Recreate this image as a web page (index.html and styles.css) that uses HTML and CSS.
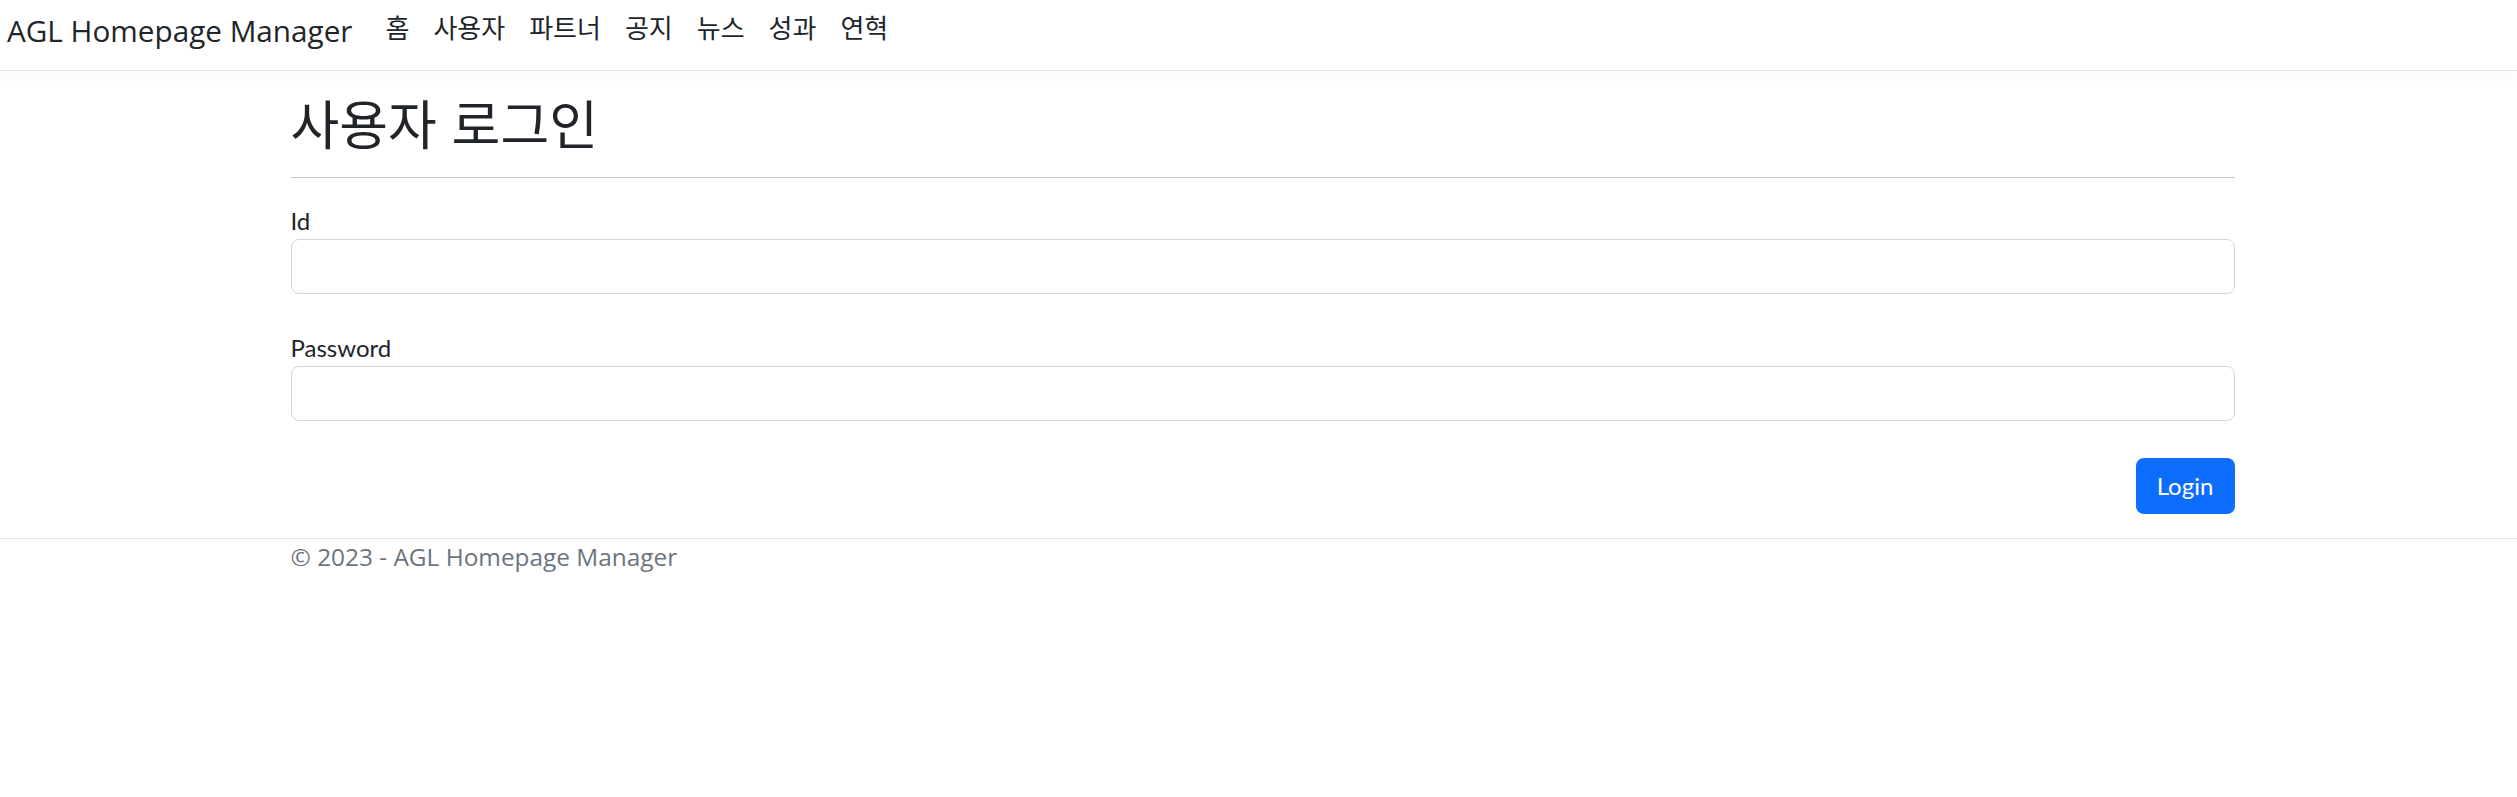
FILE: index.html
```html
<!DOCTYPE html>
<html lang="ko">
<head>
<meta charset="utf-8">
<title>사용자 로그인 - AGL Homepage Manager</title>
<link rel="stylesheet" href="styles.css">
</head>
<body>
<header class="navbar">
  <a class="brand" href="#">AGL Homepage Manager</a>
  <ul class="nav">
    <li><a class="nav-link" href="#">홈</a></li>
    <li><a class="nav-link" href="#">사용자</a></li>
    <li><a class="nav-link" href="#">파트너</a></li>
    <li><a class="nav-link" href="#">공지</a></li>
    <li><a class="nav-link" href="#">뉴스</a></li>
    <li><a class="nav-link" href="#">성과</a></li>
    <li><a class="nav-link" href="#">연혁</a></li>
  </ul>
</header>
<main class="container">
  <h1 class="title">사용자 로그인</h1>
  <hr class="divider">
  <form class="login-form">
    <div class="field">
      <label class="field-label" for="id">Id</label>
      <input class="field-input" id="id" type="text">
    </div>
    <div class="field">
      <label class="field-label" for="pw">Password</label>
      <input class="field-input" id="pw" type="password">
    </div>
    <div class="actions">
      <button class="btn-primary" type="button">Login</button>
    </div>
  </form>
</main>
<footer class="footer">
  <div class="container footer-text">© 2023 - AGL Homepage Manager</div>
</footer>
</body>
</html>
```

FILE: styles.css
```css
* { box-sizing: border-box; }

html, body {
  margin: 0;
  padding: 0;
  background: #fff;
  color: #212529;
  font-family: "Open Sans", "Noto Sans CJK KR", sans-serif;
}

.navbar {
  display: flex;
  align-items: flex-start;
  height: 71px;
  padding: 8px 0 0 7px;
  border-bottom: 1px solid #e3e3e3;
  box-shadow: 0 6px 18px rgba(0, 0, 0, 0.03);
}

.brand {
  font-size: 29.7px;
  line-height: 45px;
  color: #212529;
  text-decoration: none;
  margin-right: 21px;
}

.nav {
  display: flex;
  list-style: none;
  margin: 1px 0 0 0;
  padding: 0;
}

.nav-link {
  display: block;
  padding: 0 12px;
  font-family: "Noto Sans CJK KR", sans-serif;
  font-size: 26px;
  line-height: 36px;
  color: #212529;
  text-decoration: none;
}

.container {
  width: 1944px;
  margin-left: calc(50% - 968px);
}

.title {
  margin: 22px 0 0 0;
  font-family: "Noto Sans CJK KR", sans-serif;
  font-weight: 400;
  font-size: 53px;
  line-height: 58px;
  color: #212529;
}

.divider {
  margin: 26px 0 0 0;
  border: 0;
  border-top: 1px solid #c8c9ca;
  height: 0;
}

.login-form {
  display: flex;
  flex-direction: column;
  gap: 36px;
  margin-top: 25px;
}

.field {
  display: flex;
  flex-direction: column;
}

.field-label {
  font-family: Lato, "Noto Sans CJK KR", sans-serif;
  font-size: 24px;
  line-height: 36px;
  color: #212529;
}

.field-input {
  height: 55px;
  width: 100%;
  border: 1.5px solid #d3d6d9;
  border-radius: 8px;
  background: #fff;
  padding: 0 18px;
  font-size: 24px;
}

.actions {
  display: flex;
  justify-content: flex-end;
  margin-top: 1px;
  margin-bottom: 24px;
}

.btn-primary {
  height: 56px;
  width: 99px;
  border: 0;
  border-radius: 8px;
  background: #0d6efd;
  color: #fff;
  font-family: Lato, sans-serif;
  font-size: 24px;
  line-height: 36px;
  padding: 0;
}

.footer {
  border-top: 1px solid #e3e3e3;
}

.footer-text {
  font-size: 24.4px;
  line-height: 36px;
  color: #6c757d;
}
```
